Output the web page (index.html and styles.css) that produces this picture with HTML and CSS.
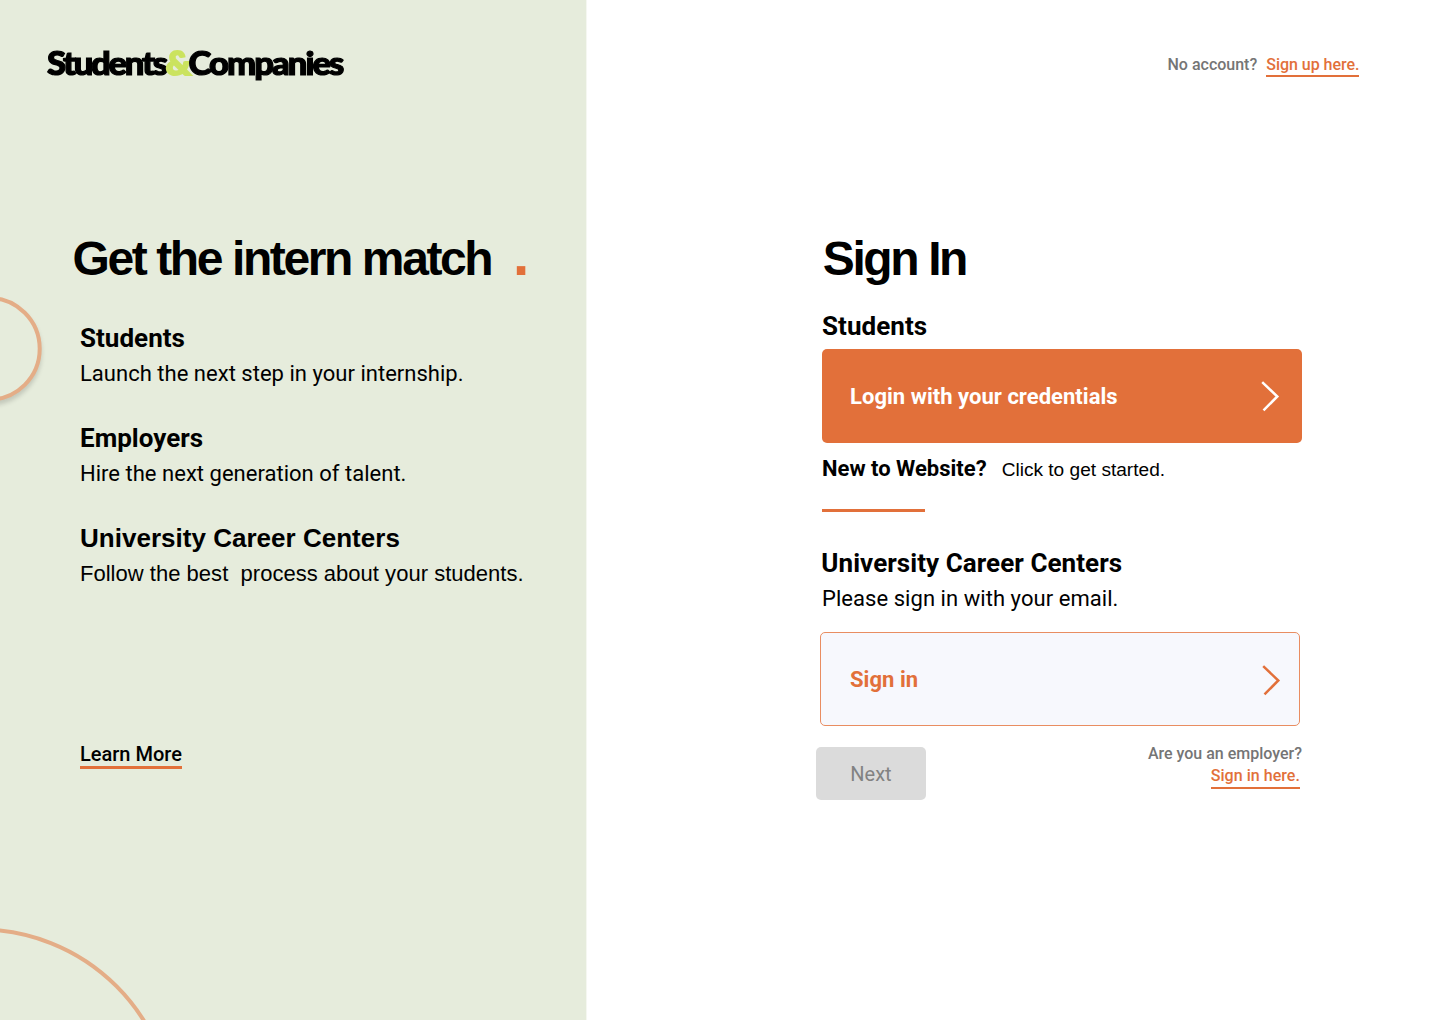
FILE: index.html
```html
<!DOCTYPE html>
<html lang="en">
<head>
<meta charset="utf-8">
<title>Students&amp;Companies</title>
<link rel="stylesheet" href="styles.css">
</head>
<body>
<div class="page">
  <aside class="intro">
    <svg class="rings" width="586" height="1020" viewBox="0 0 586 1020" aria-hidden="true">
      <circle class="ring ring-small" cx="-11.3" cy="348.8" r="51"/>
      <circle class="ring" cx="-20.4" cy="1123" r="193.5"/>
    </svg>
    <div class="logo"><span>Students</span><span class="amp">&amp;</span><span class="second">Companies</span></div>
    <h1 class="headline"><span>Get the intern match</span><span class="dot">.</span></h1>
    <div class="points">
      <section><h2 class="title">Students</h2><p class="copy">Launch the next step in your internship.</p></section>
      <section><h2 class="title">Employers</h2><p class="copy">Hire the next generation of talent.</p></section>
      <section class="arial"><h2 class="title">University Career Centers</h2><p class="copy">Follow the best&nbsp; process about your students.</p></section>
    </div>
    <a class="learn">Learn More</a>
  </aside>
  <main class="main">
    <div class="top"><span>No account?</span><a class="link">Sign up here.</a></div>
    <div class="form">
      <h1 class="headline">Sign In</h1>
      <h2 class="title">Students</h2>
      <a class="card login"><span>Login with your credentials</span>
        <svg width="20" height="32" viewBox="0 0 20 32"><path d="M2.2 2.2 17.3 16.5 3.5 30.4"/></svg></a>
      <div class="new"><strong>New to Website?</strong><span>Click to get started.</span></div>
      <div class="rule"></div>
      <h2 class="title ucc">University Career Centers</h2>
      <p class="copy">Please sign in with your email.</p>
      <a class="card email"><span>Sign in</span>
        <svg width="20" height="32" viewBox="0 0 20 32"><path d="M2.2 2.2 17.3 16.5 3.5 30.4"/></svg></a>
      <div class="foot">
        <button class="next">Next</button>
        <div class="employer"><span>Are you an employer?</span><a class="link here">Sign in here.</a></div>
      </div>
    </div>
  </main>
</div>
</body>
</html>
```
FILE: styles.css
```css
* { box-sizing: border-box; }
body { margin: 0; background: #fff; color: #000; font-family: Roboto, "Liberation Sans", sans-serif; }
h1, h2, p { margin: 0; }
.page { display: flex; width: 1434px; height: 1020px; overflow: hidden; }

/* Left panel */
.intro { position: relative; width: 587px; height: 1020px; background: #e6ecdc; border-right: 1px solid #f5f7f1; padding: 40px 0 0; display: flex; flex-direction: column; align-items: flex-start; overflow: hidden; }
.rings { position: absolute; left: 0; top: 0; }
.ring { fill: #e6ecdc; stroke: #e4ad87; stroke-width: 4; }
.ring-small { filter: drop-shadow(0 4px 2px rgba(0, 0, 0, .15)); }

.logo { position: relative; margin-left: 46.5px; height: 44px; line-height: 45px; font-family: Lato, sans-serif; font-weight: 900; font-size: 32px; letter-spacing: -2.1px; -webkit-text-stroke: 1.2px; display: flex; transform: scaleX(1.08); transform-origin: left; }
.amp { color: #cbe35f; -webkit-text-stroke: 2px; }
.second { letter-spacing: -1.8px; }

.headline { font-family: "Liberation Sans", Arial, sans-serif; font-weight: 700; font-size: 48px; line-height: 56px; letter-spacing: -2.4px; white-space: nowrap; }
.intro .headline { margin: 147px 0 0 72.5px; display: flex; align-items: baseline; height: 56px; gap: 21.5px; }
.dot { color: #e2703a; font-size: 60px; line-height: 0; letter-spacing: 0; }

.points { margin: 36px 0 0 80px; display: flex; flex-direction: column; gap: 34px; }
.title { font-weight: 700; font-size: 26px; line-height: 30px; letter-spacing: .02px; white-space: nowrap; }
.copy { font-size: 22px; line-height: 30px; letter-spacing: .02px; margin-top: 6px; white-space: nowrap; }
.arial { font-family: "Liberation Sans", Arial, sans-serif; }
.learn { margin: 153px 0 0 80px; font-size: 20px; font-weight: 500; line-height: 24px; border-bottom: 3px solid #e2703a; }

/* Right side */
.main { flex: 1; display: flex; flex-direction: column; }
.top { display: flex; margin: 55px 0 0 580.5px; font-size: 16px; font-weight: 500; line-height: 20px; color: #757575; gap: 9px; }
.link { color: #e2703a; border-bottom: 2px solid #e2703a; font-weight: 500; }
.top .link { letter-spacing: -.03px; }
.form { width: 480px; margin: 154px 0 0 235px; display: flex; flex-direction: column; }
.form .headline { margin-left: .8px; }
.form > .title { margin-top: 24px; letter-spacing: .06px; }
.card { display: flex; justify-content: space-between; align-items: center; width: 480px; height: 93.5px; border-radius: 5px; padding: 1px 22px 0 28px; font-size: 22px; font-weight: 700; letter-spacing: .03px; }
.card path { fill: none; stroke: currentColor; stroke-width: 2.5; }
.login { background: #e2703a; color: #fff; margin-top: 8px; }
.new { display: flex; align-items: baseline; gap: 15px; margin-top: 12.5px; line-height: 28px; font-size: 19.1px; font-family: "Liberation Sans", Arial, sans-serif; }
.new strong { font: 700 22px/28px Roboto, sans-serif; }
.rule { width: 102.5px; height: 3px; background: #e2703a; margin-top: 25px; }
.form > .ucc { margin: 36px 0 0 -.7px; }
.form > .copy { margin-top: 6px; letter-spacing: .05px; }
.email { background: #f7f8fd; border: 1px solid #e98d61; color: #e2703a; margin: 18px 0 0 -2px; padding: 1px 18px 0 29px; }
.email span { padding-top: 1px; }
.email svg { margin-top: 2px; }
.foot { display: flex; justify-content: space-between; margin-top: 21.5px; }
.next { margin-left: -6px; width: 110px; height: 53px; border: 0; border-radius: 5px; background: #dbdbdb; color: #828282; font: 400 20px/24px Roboto, sans-serif; }
.employer { display: flex; flex-direction: column; align-items: flex-end; margin-top: -4px; font-size: 16px; font-weight: 500; line-height: 22px; color: #757575; }
.here { margin-right: 2px; letter-spacing: .05px; }
```
